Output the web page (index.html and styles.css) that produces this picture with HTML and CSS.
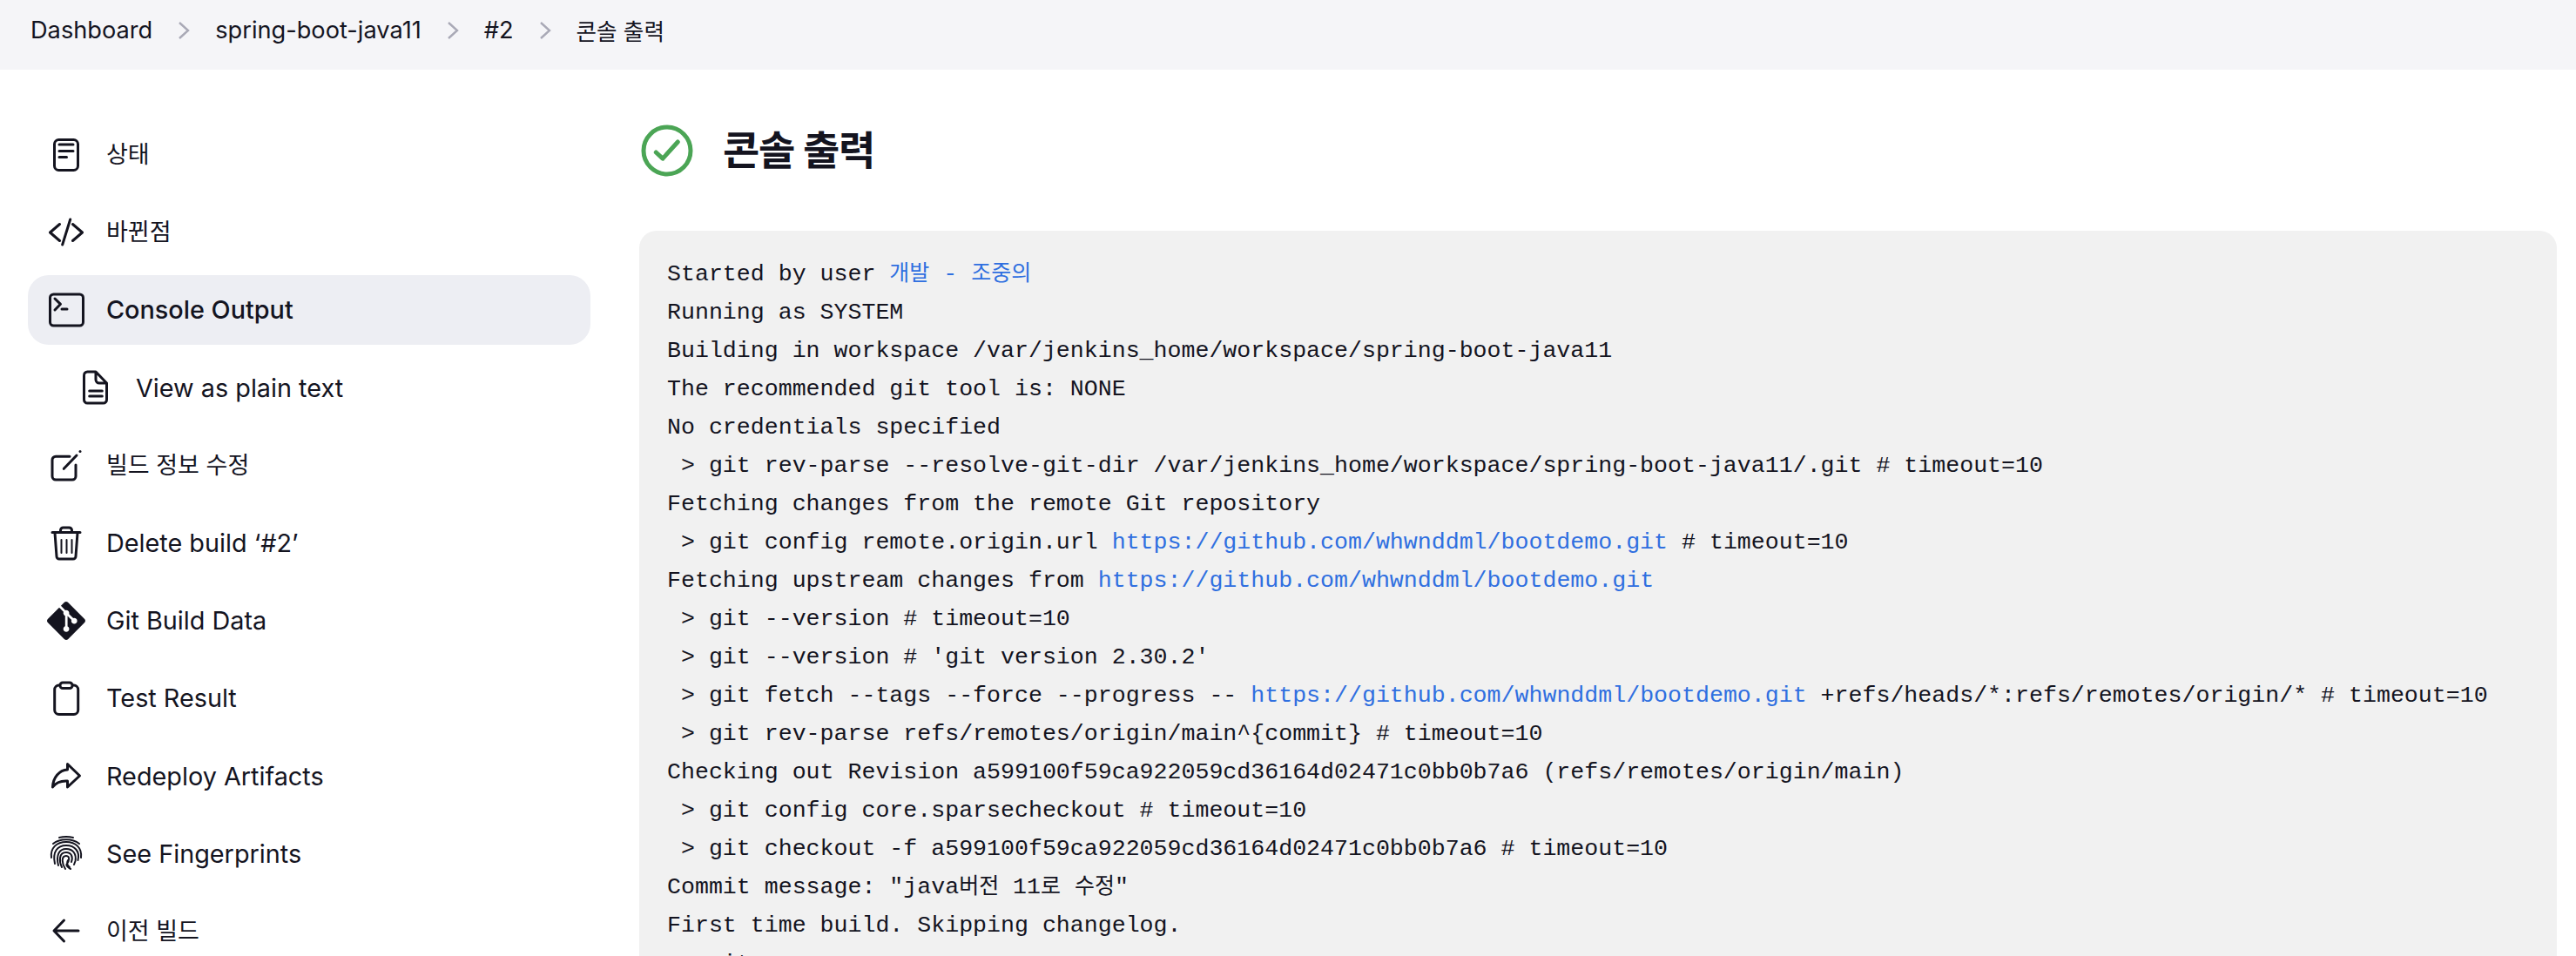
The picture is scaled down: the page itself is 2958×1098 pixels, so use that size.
FILE: index.html
```html
<!DOCTYPE html>
<html lang="ko">
<head>
<meta charset="utf-8">
<title>콘솔 출력</title>
<link rel="stylesheet" href="styles.css">
</head>
<body>
<nav class="crumbs">
  <a class="crumb" href="#">Dashboard</a>
  <svg class="sep" viewBox="0 0 14 20"><path d="M2 1l10 9-10 9"/></svg>
  <a class="crumb" href="#">spring-boot-java11</a>
  <svg class="sep" viewBox="0 0 14 20"><path d="M2 1l10 9-10 9"/></svg>
  <a class="crumb" href="#">#2</a>
  <svg class="sep" viewBox="0 0 14 20"><path d="M2 1l10 9-10 9"/></svg>
  <a class="crumb ko" href="#">콘솔 출력</a>
</nav>
<div class="layout">
  <aside class="side">
    <a class="item" href="#"><svg class="ico" viewBox="0 0 40 40"><rect x="6.5" y="2.5" width="27" height="35" rx="5"/><path d="M12 8h16M12 15.5h16M12 22.5h8.5"/></svg><span class="ko">상태</span></a>
    <a class="item" href="#"><svg class="ico" viewBox="0 0 40 40"><path d="M12.5 10.5L1.5 20l11 9.5M27.5 10.5l11 9.5-11 9.5M24.7 5l-9 29"/></svg><span class="ko">바뀐점</span></a>
    <a class="item active" href="#"><svg class="ico" viewBox="0 0 40 40"><rect x="1.5" y="2" width="38" height="36" rx="4"/><path d="M7 7l6.5 6.300L7 20M15 19h6"/></svg><span>Console Output</span></a>
    <a class="item sub" href="#"><svg class="ico" viewBox="0 0 40 40"><path d="M6.5 6.500a4 4 0 0 1 4-4.500H20l12.500 13v18.500a4 4 0 0 1-4 4.500h-18a4 4 0 0 1-4-4.500zM20 2v9a4 4 0 0 0 4 4h8.500M12.700 24h14.600M12.700 30h14.600"/></svg><span>View as plain text</span></a>
    <a class="item" href="#"><svg class="ico" viewBox="0 0 40 40"><path d="M24 10.200H8a4 4 0 0 0-4 4V33a4 4 0 0 0 4 4h19a4 4 0 0 0 4-4V20M17.300 24.300L32 9"/><circle class="dot" cx="36" cy="4.500" r="1.500"/></svg><span class="ko">빌드 정보 수정</span></a>
    <a class="item" href="#"><svg class="ico" viewBox="0 0 40 40"><path d="M4 7.500h32M13.500 7.500V5a3 3 0 0 1 3-3h7a3 3 0 0 1 3 3v2.500M7 8l2 27a3 3 0 0 0 3 3h16a3 3 0 0 0 3-3l2-27"/><path class="thin" d="M14.500 16v15M20.500 16v15M26.500 16v15"/></svg><span>Delete build ‘#2’</span></a>
    <a class="item" href="#"><svg class="ico solid" viewBox="1.090 1.090 21.820 21.820"><path d="M23.546 10.930L13.067.452c-.604-.603-1.582-.603-2.188 0L8.708 2.627l2.760 2.760c.645-.215 1.379-.07 1.889.441.516.515.658 1.258.438 1.900l2.658 2.660c.645-.223 1.387-.078 1.900.435.721.72.721 1.884 0 2.604-.719.719-1.881.719-2.600 0-.539-.541-.674-1.337-.404-1.996L12.860 8.955v6.525c.176.086.342.203.488.348.713.721.713 1.883 0 2.600-.719.721-1.889.721-2.609 0-.719-.719-.719-1.879 0-2.598.182-.18.387-.316.605-.406V8.835c-.217-.091-.424-.222-.6-.401-.545-.545-.676-1.342-.396-2.009L7.636 3.700.45 10.881c-.6.605-.6 1.584 0 2.189l10.480 10.477c.604.604 1.582.604 2.186 0l10.430-10.430c.605-.603.605-1.582 0-2.187"/></svg><span>Git Build Data</span></a>
    <a class="item" href="#"><svg class="ico" viewBox="0 0 40 40"><rect x="6.700" y="5" width="27" height="33.500" rx="5"/><rect class="clip" x="13" y="2" width="14" height="6.500" rx="3"/></svg><span>Test Result</span></a>
    <a class="item" href="#"><svg class="ico" viewBox="0 0 40 40"><path d="M4.500 33C5 22 12 13.500 21.500 13V6.500L35.500 20l-14 13v-7C13 25.500 8 28 4.500 33z"/></svg><span>Redeploy Artifacts</span></a>
    <a class="item" href="#"><svg class="ico print" viewBox="0 0 40 40"><path d="M12 2q8-2 16 0M5 9c8-6.500 22-6.500 30 0M3 25C1.500 14 9 7 20 7s18.500 7 17 18M7 32C4 18 10 11 20 11s16 7 13.500 17M11 34C8 22 12 15 20 15s12 6 10.500 14l-1.500 4M15 36c-3-6-4-17 5-17 6 0 8 5 6 11M19 38c-4-6-5-15 1-15 5 0 3 7 1 9s2 5 4 6M24 36c-3-2-4-4-2-8"/></svg><span>See Fingerprints</span></a>
    <a class="item" href="#"><svg class="ico" viewBox="0 0 40 40"><path d="M7 20h27M17.500 8L6 20l11.500 12"/></svg><span class="ko">이전 빌드</span></a>
  </aside>
  <main class="main">
    <header class="head">
      <svg class="status" viewBox="0 0 60 60"><circle cx="30" cy="30" r="27"/><path d="M17.300 32l7.700 7.200L42.300 20"/></svg>
      <h1 class="title">콘솔 출력</h1>
    </header>
<pre class="log">Started by user <a href="#"><span class="han">개발</span> - <span class="han">조중의</span></a>
Running as SYSTEM
Building in workspace /var/jenkins_home/workspace/spring-boot-java11
The recommended git tool is: NONE
No credentials specified
 &gt; git rev-parse --resolve-git-dir /var/jenkins_home/workspace/spring-boot-java11/.git # timeout=10
Fetching changes from the remote Git repository
 &gt; git config remote.origin.url <a href="#">https://github.com/whwnddml/bootdemo.git</a> # timeout=10
Fetching upstream changes from <a href="#">https://github.com/whwnddml/bootdemo.git</a>
 &gt; git --version # timeout=10
 &gt; git --version # 'git version 2.30.2'
 &gt; git fetch --tags --force --progress -- <a href="#">https://github.com/whwnddml/bootdemo.git</a> +refs/heads/*:refs/remotes/origin/* # timeout=10
 &gt; git rev-parse refs/remotes/origin/main^{commit} # timeout=10
Checking out Revision a599100f59ca922059cd36164d02471c0bb0b7a6 (refs/remotes/origin/main)
 &gt; git config core.sparsecheckout # timeout=10
 &gt; git checkout -f a599100f59ca922059cd36164d02471c0bb0b7a6 # timeout=10
Commit message: "java<span class="han">버전</span> 11<span class="han">로</span> <span class="han">수정</span>"
First time build. Skipping changelog.
 &gt; git</pre>
  </main>
</div>
</body>
</html>
```
FILE: styles.css
```css
* { box-sizing: border-box; }
html, body { margin: 0; height: 1098px; overflow: hidden; background: #fff; }
body { font-family: Inter, "Noto Sans CJK KR", sans-serif; color: #14141f; -webkit-font-smoothing: antialiased; }
a { color: inherit; text-decoration: none; }

.crumbs { height: 80px; background: #f5f5f8; display: flex; align-items: center; padding: 0 0 11px 35px; gap: 29px; font-size: 27.200px; }
.crumbs .ko { font-size: 25.600px; }
.sep { width: 14px; height: 20px; fill: none; stroke: #a9a9b6; stroke-width: 2.400; }

.layout { display: flex; align-items: flex-start; }
.side { width: 646px; margin: 58px 0 0 32px; flex: none; display: flex; flex-direction: column; gap: 10px; }
.item { height: 79.200px; border-radius: 24px; display: flex; align-items: center; gap: 26px; padding-left: 24px; font-size: 28.800px; }
.item .ko { font-size: 27px; margin-bottom: 4px; }
.item.active { background: #edeef3; font-weight: 500; }
.item.sub { margin-left: 34px; }
.ico { width: 40px; height: 40px; flex: none; overflow: visible; fill: none; stroke: #14141f; stroke-width: 3; stroke-linecap: round; stroke-linejoin: round; }
.ico .thin { stroke-width: 2; }
.ico .dot { fill: #14141f; stroke: none; }
.ico .clip { fill: #fff; }
.ico.solid { fill: #14141f; stroke: none; }
.ico.print { stroke-width: 2; }

.main { flex: none; width: 2202px; margin-left: 56px; padding-top: 63px; }
.head { display: flex; align-items: center; height: 60px; margin-left: 2px; gap: 34px; margin-bottom: 62px; }
.status { width: 60px; height: 60px; flex: none; fill: none; stroke: #4ba555; stroke-width: 5; stroke-linecap: round; stroke-linejoin: round; }
.title { margin: 0 0 2px; font-size: 46px; font-weight: 700; line-height: 58px; letter-spacing: -1.200px; }
.log { margin: 0; background: #f1f1f1; border-radius: 20px; padding: 28px 32px 40px; font-family: "Liberation Mono", "Noto Sans CJK KR", monospace; font-size: 26.600px; line-height: 44px; color: #14141f; white-space: pre; }
.log a { color: #2f6fe0; }
.han { font-size: 25px; line-height: 1; }
```
